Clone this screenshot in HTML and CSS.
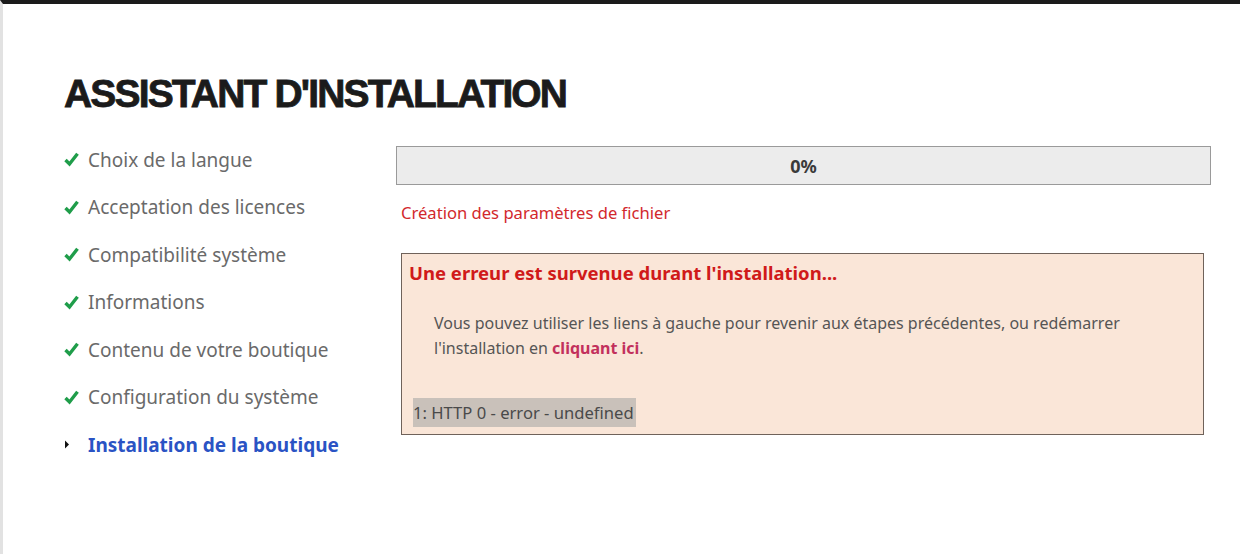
FILE: index.html
```html
<!DOCTYPE html>
<html lang="fr">
<head>
<meta charset="utf-8">
<title>Assistant d'installation</title>
<link rel="stylesheet" href="styles.css">
</head>
<body>
<div class="page">
  <h1 class="title">ASSISTANT D'INSTALLATION</h1>
  <div class="layout">
    <ul class="steps">
      <li class="step done"><span class="mark"><svg width="15" height="15" viewBox="0 0 15 15"><path d="M1.5 8 L5.5 12 L13.5 1.8" fill="none" stroke="#1f9d4a" stroke-width="3.4"/></svg></span>Choix de la langue</li>
      <li class="step done"><span class="mark"><svg width="15" height="15" viewBox="0 0 15 15"><path d="M1.5 8 L5.5 12 L13.5 1.8" fill="none" stroke="#1f9d4a" stroke-width="3.4"/></svg></span>Acceptation des licences</li>
      <li class="step done"><span class="mark"><svg width="15" height="15" viewBox="0 0 15 15"><path d="M1.5 8 L5.5 12 L13.5 1.8" fill="none" stroke="#1f9d4a" stroke-width="3.4"/></svg></span>Compatibilité système</li>
      <li class="step done"><span class="mark"><svg width="15" height="15" viewBox="0 0 15 15"><path d="M1.5 8 L5.5 12 L13.5 1.8" fill="none" stroke="#1f9d4a" stroke-width="3.4"/></svg></span>Informations</li>
      <li class="step done"><span class="mark"><svg width="15" height="15" viewBox="0 0 15 15"><path d="M1.5 8 L5.5 12 L13.5 1.8" fill="none" stroke="#1f9d4a" stroke-width="3.4"/></svg></span>Contenu de votre boutique</li>
      <li class="step done"><span class="mark"><svg width="15" height="15" viewBox="0 0 15 15"><path d="M1.5 8 L5.5 12 L13.5 1.8" fill="none" stroke="#1f9d4a" stroke-width="3.4"/></svg></span>Configuration du système</li>
      <li class="step current"><span class="mark"><svg width="15" height="15" viewBox="0 0 15 15"><path d="M1 3.5 L5 7.5 L1 11.5 Z" fill="#111"/></svg></span>Installation de la boutique</li>
    </ul>
    <div class="content">
      <div class="progress">0%</div>
      <p class="status">Création des paramètres de fichier</p>
      <div class="error-box">
        <h2 class="error-title">Une erreur est survenue durant l'installation...</h2>
        <p class="error-text">Vous pouvez utiliser les liens à gauche pour revenir aux étapes précédentes, ou redémarrer l'installation en <a href="#" class="restart">cliquant ici</a>.</p>
        <div class="log"><span class="log-line">1: HTTP 0 - error - undefined</span></div>
      </div>
    </div>
  </div>
</div>
</body>
</html>
```
FILE: styles.css
```css
html, body {
  margin: 0;
  padding: 0;
  background: #ffffff;
}
body {
  font-family: "Noto Sans", "Open Sans", sans-serif;
  border-top: 4px solid #1b1b1b;
  border-left: 3px solid #e2e2e2;
  min-height: 554px;
  box-sizing: border-box;
}
.page {
  padding: 66px 0 0 61px;
}
.title {
  margin: 0;
  font-family: "Liberation Sans", Arial, sans-serif;
  font-weight: 900;
  font-size: 39px;
  line-height: 48px;
  letter-spacing: -1.85px;
  color: #1b1b1b;
  -webkit-text-stroke: 0.8px #1b1b1b;
}
.layout {
  display: flex;
  margin-top: 18px;
}
.steps {
  list-style: none;
  margin: 0;
  padding: 0;
  width: 332px;
  flex: none;
}
.step {
  display: flex;
  align-items: center;
  height: 47.5px;
  font-size: 19px;
  color: #6a6a6a;
}
.mark {
  width: 24px;
  flex: none;
  display: flex;
  align-items: center;
}
.step.current {
  color: #2a53c4;
  font-weight: 700;
}
.content {
  width: 815px;
  padding-top: 10px;
}
.progress {
  height: 37px;
  border: 1px solid #9a9a9a;
  background: #ececec;
  display: flex;
  align-items: center;
  justify-content: center;
  font-weight: 700;
  font-size: 18px;
  color: #3a3a3a;
}
.status {
  margin: 17px 0 0 5px;
  font-size: 16.6px;
  line-height: 22px;
  color: #d2282c;
}
.error-box {
  margin: 29px 7px 0 5px;
  border: 1px solid #6f625a;
  background: #fae6d8;
  padding: 6px 0 7px 7px;
}
.error-title {
  margin: 0;
  font-size: 18.5px;
  line-height: 26px;
  font-weight: 700;
  color: #d01a1a;
}
.error-text {
  margin: 25px 40px 0 25px;
  font-size: 16px;
  line-height: 25px;
  color: #555555;
}
.restart {
  color: #c2305c;
  font-weight: 700;
  text-decoration: none;
}
.log {
  margin-top: 37px;
  padding-left: 4px;
}
.log-line {
  display: inline-block;
  background: #c9c1ba;
  font-size: 16.6px;
  line-height: 29px;
  color: #4a4a4a;
  padding-right: 2px;
}
```
